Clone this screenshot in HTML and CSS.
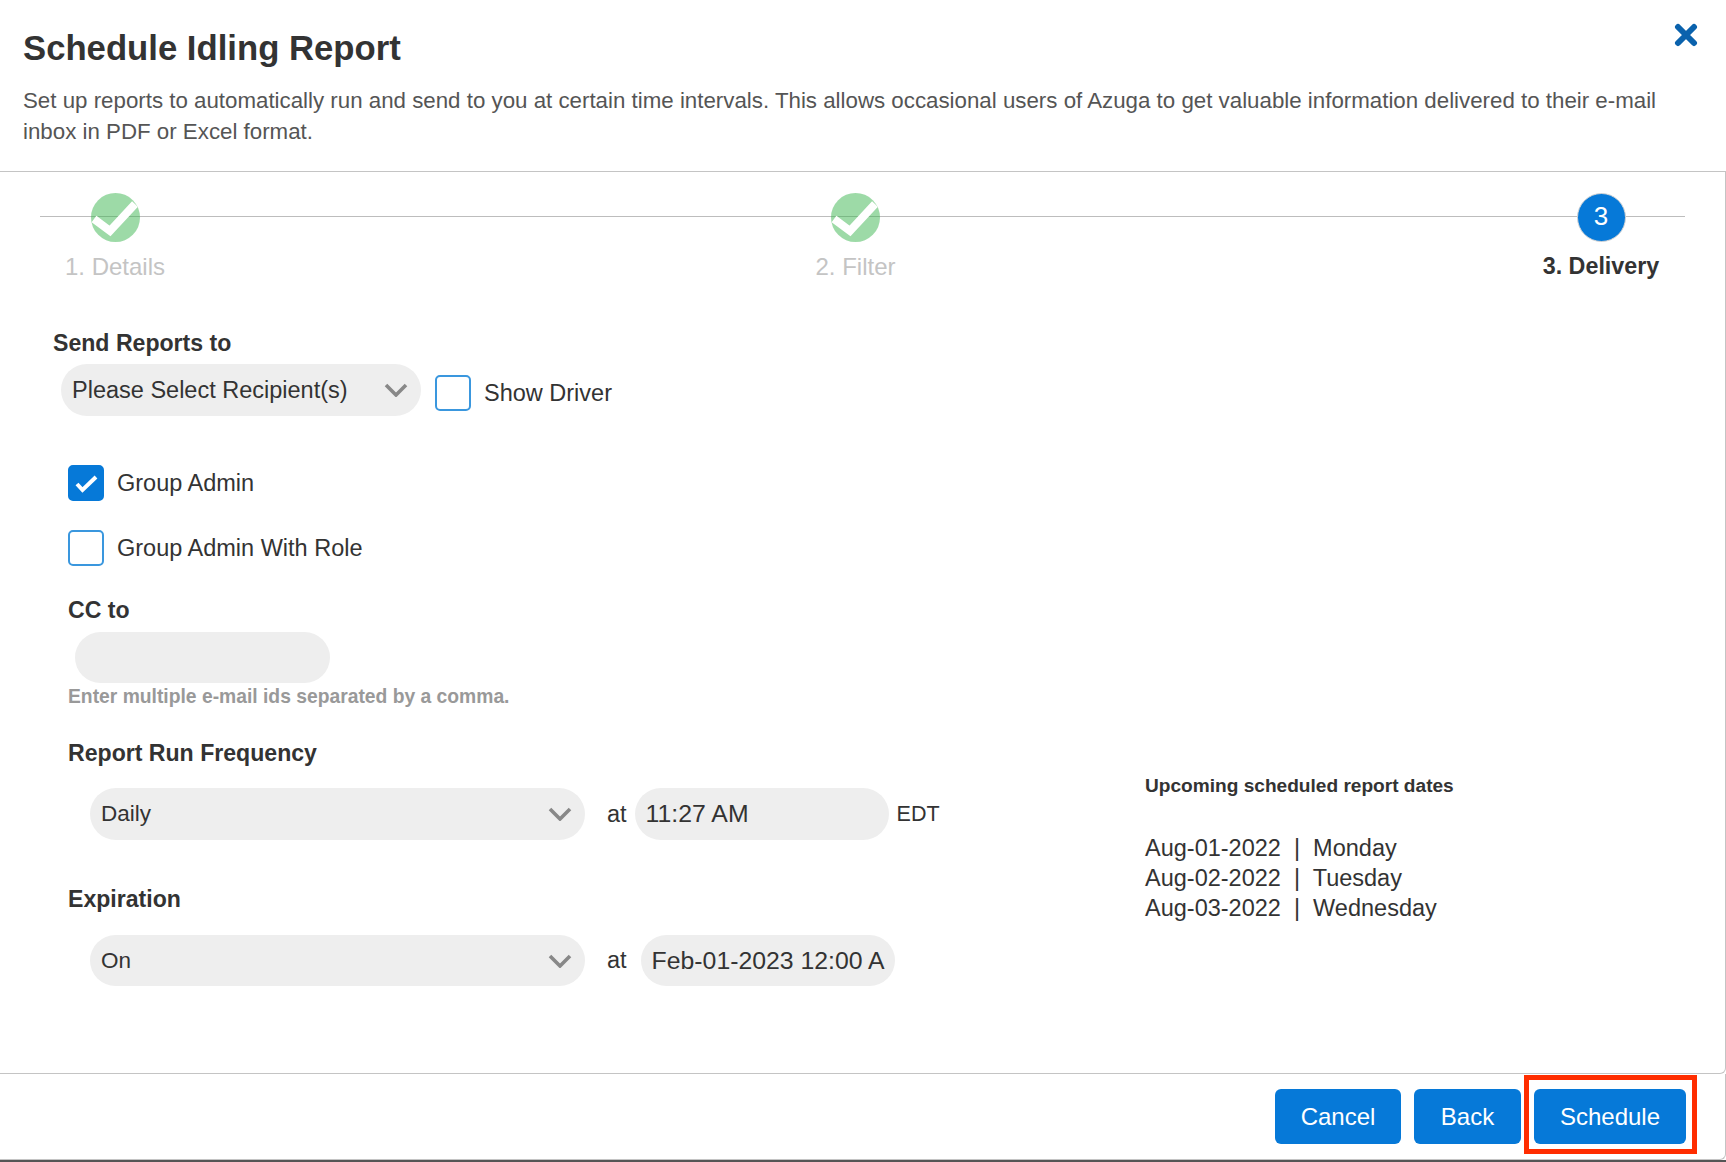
FILE: index.html
```html
<!DOCTYPE html>
<html lang="en">
<head>
<meta charset="utf-8">
<title>Schedule Idling Report</title>
<link rel="stylesheet" href="styles.css">
</head>
<body>
<div class="modal">
  <header class="head">
    <h1 class="title">Schedule Idling Report</h1>
    <p class="desc">Set up reports to automatically run and send to you at certain time intervals. This allows occasional users of Azuga to get valuable information delivered to their e-mail inbox in PDF or Excel format.</p>
    <svg class="close" viewBox="0 0 24 24" aria-label="Close"><path d="M4 4 L20 20 M20 4 L4 20"/></svg>
  </header>
  <main class="content">
    <div class="stepper">
      <div class="step done">
        <span class="circle"><svg viewBox="0 0 49 49"><path d="M3 26 L19 38 L44 11"/></svg></span>
        <span class="step-label">1. Details</span>
      </div>
      <div class="step done mid">
        <span class="circle"><svg viewBox="0 0 49 49"><path d="M3 26 L19 38 L44 11"/></svg></span>
        <span class="step-label">2. Filter</span>
      </div>
      <div class="step active">
        <span class="circle">3</span>
        <span class="step-label">3. Delivery</span>
      </div>
    </div>

    <section class="send">
      <div class="label">Send Reports to</div>
      <div class="send-row">
        <div class="select recipients">Please Select Recipient(s)<svg class="chev" viewBox="0 0 24 14"><path d="M2 2 L12 12 L22 2"/></svg></div>
        <span class="check"></span>
        <span class="check-text">Show Driver</span>
      </div>
    </section>

    <div class="split">
      <div class="left">
        <div class="check-row first">
          <span class="check on"><svg viewBox="0 0 32 32"><path d="M7 17 L12.5 23 L26 10"/></svg></span>
          <span class="check-text">Group Admin</span>
        </div>
        <div class="check-row">
          <span class="check"></span>
          <span class="check-text">Group Admin With Role</span>
        </div>
        <div class="label cc">CC to</div>
        <div class="input cc-input"></div>
        <div class="hint">Enter multiple e-mail ids separated by a comma.</div>

        <div class="label freq">Report Run Frequency</div>
        <div class="field-row">
          <div class="select wide">Daily<svg class="chev" viewBox="0 0 24 14"><path d="M2 2 L12 12 L22 2"/></svg></div>
          <span class="at">at</span>
          <div class="input time">11:27 AM</div>
          <span class="tz">EDT</span>
        </div>

        <div class="label exp">Expiration</div>
        <div class="field-row exp-row">
          <div class="select wide short">On<svg class="chev" viewBox="0 0 24 14"><path d="M2 2 L12 12 L22 2"/></svg></div>
          <span class="at">at</span>
          <div class="input date short">Feb-01-2023 12:00 A</div>
        </div>
      </div>
      <aside class="upcoming">
        <div class="up-title">Upcoming scheduled report dates</div>
        <div class="up-dates">
          <div>Aug-01-2022 &nbsp;|&nbsp; Monday</div>
          <div>Aug-02-2022 &nbsp;|&nbsp; Tuesday</div>
          <div>Aug-03-2022 &nbsp;|&nbsp; Wednesday</div>
        </div>
      </aside>
    </div>
  </main>
  <footer class="foot">
    <button class="btn cancel">Cancel</button>
    <button class="btn back">Back</button>
    <button class="btn schedule">Schedule</button>
    <span class="highlight"></span>
  </footer>
</div>
</body>
</html>
```

FILE: styles.css
```css
* { box-sizing: border-box; }
html, body { margin: 0; padding: 0; background: #fff; }
body {
  width: 1726px;
  height: 1162px;
  overflow: hidden;
  font-family: "Liberation Sans", Arial, sans-serif;
  color: #333;
}
.modal {
  height: 1162px;
  display: flex;
  flex-direction: column;
  border-bottom: 2px solid #555;
}
.head {
  position: relative;
  height: 171px;
  flex: none;
  padding: 28px 40px 0 23px;
}
.title {
  margin: 0;
  font-size: 34.7px;
  line-height: 40px;
  font-weight: 700;
  color: #333;
}
.desc {
  margin: 17px 0 0;
  font-size: 22.3px;
  line-height: 31px;
  color: #555;
}
.close {
  position: absolute;
  left: 1674px;
  top: 23px;
  width: 24px;
  height: 24px;
  fill: none;
  stroke: #0a62ad;
  stroke-width: 6;
  stroke-linecap: round;
}
.content {
  height: 903px;
  flex: none;
  border-top: 1px solid #c4c4c4;
  border-right: 1px solid #c4c4c4;
  border-bottom: 1px solid #c4c4c4;
  border-bottom-right-radius: 6px;
  padding: 21px 0 0;
}
.stepper {
  position: relative;
  margin: 0 69px 0 60px;
  display: flex;
  justify-content: space-between;
}
.stepper::before {
  content: "";
  position: absolute;
  left: -20px;
  right: -29px;
  top: 23px;
  height: 1px;
  background: #bdbdbd;
}
.step {
  position: relative;
  width: 110px;
  display: flex;
  flex-direction: column;
  align-items: center;
}
.step.mid { margin-right: 5px; }
.circle {
  width: 49px;
  height: 49px;
  border-radius: 50%;
  display: flex;
  align-items: center;
  justify-content: center;
  overflow: hidden;
}
.done .circle { background: rgba(60, 181, 80, .5); }
.circle svg {
  width: 49px;
  height: 49px;
  fill: none;
  stroke: #fff;
  stroke-width: 8;
}
.active .circle {
  background: #0679d8;
  color: #fff;
  font-size: 26px;
  border: 1px solid #d5d5d5;
  padding-bottom: 3px;
}
.step-label {
  margin-top: 11px;
  font-size: 24px;
  line-height: 27px;
  white-space: nowrap;
  color: #c4c4c4;
}
.active .step-label { color: #333; font-weight: 700; font-size: 23.3px; }
.send { padding: 49px 0 0 53px; }
.label {
  font-size: 23.1px;
  line-height: 28px;
  font-weight: 700;
  color: #333;
}
.send-row {
  margin: 7px 0 0 8px;
  display: flex;
  align-items: center;
}
.select, .input {
  background: #eee;
  font-size: 23.5px;
  color: #333;
  display: flex;
  align-items: center;
  border-radius: 26px;
  padding-left: 11px;
  position: relative;
}
.select { height: 52px; }
.recipients { width: 360px; }
.wide { width: 495px; font-size: 22.5px; }
.chev {
  position: absolute;
  right: 13px;
  top: 19px;
  width: 24px;
  height: 14px;
  fill: none;
  stroke: #888;
  stroke-width: 3.6;
}
.check {
  flex: none;
  width: 36px;
  height: 36px;
  border: 2px solid #3a97de;
  border-radius: 5px;
  background: #fff;
  display: block;
}
.send-row .check { margin: 6px 0 0 14px; }
.check-text { font-size: 23.5px; line-height: 28px; margin-left: 13px; color: #333; }
.send-row .check-text { margin-top: 6px; }
.check.on { background: #0679d8; border-color: #0679d8; }
.check.on svg {
  display: block;
  width: 100%;
  height: 100%;
  fill: none;
  stroke: #fff;
  stroke-width: 4;
}
.split { display: flex; }
.left { width: 1145px; padding-left: 68px; flex: none; }
.check-row { display: flex; align-items: center; height: 36px; margin-top: 29px; }
.check-row.first { margin-top: 49px; }
.cc { margin-top: 30px; }
.cc-input { width: 255px; height: 51px; margin: 8px 0 0 7px; }
.hint {
  margin-top: 2px;
  font-size: 19.3px;
  line-height: 24px;
  font-weight: 700;
  color: #999;
}
.freq { margin-top: 30px; }
.field-row { display: flex; align-items: center; margin: 21px 0 0 22px; }
.exp-row { margin-top: 22px; }
.at { font-size: 23.5px; margin-left: 22px; color: #333; }
.time { width: 254px; height: 52px; margin-left: 8px; font-size: 24.8px; }
.tz { font-size: 21.5px; margin-left: 8px; color: #333; }
.exp { margin-top: 45px; }
.short { height: 51px; }
.date { width: 254px; margin-left: 14px; white-space: nowrap; overflow: hidden; font-size: 24.8px; }
.upcoming { margin-top: 358px; }
.up-title {
  font-size: 19.1px;
  line-height: 24px;
  font-weight: 700;
  color: #333;
}
.up-dates {
  margin-top: 35px;
  font-size: 23.5px;
  line-height: 30px;
  color: #333;
}
.foot {
  position: relative;
  flex: 1;
  display: flex;
  justify-content: flex-end;
  align-items: flex-start;
  gap: 13px;
  padding: 15px 39px 0 0;
  border-right: 1px solid #c4c4c4;
  border-bottom: 1px solid #c4c4c4;
  border-bottom-right-radius: 6px;
}
.btn {
  height: 55px;
  border: 0;
  border-radius: 6px;
  background: #0679d8;
  color: #fff;
  font-family: "Liberation Sans", Arial, sans-serif;
  font-size: 24px;
  padding: 0;
}
.cancel { width: 126px; }
.back { width: 107px; }
.schedule { width: 152px; }
.highlight {
  position: absolute;
  left: 1524px;
  top: 1px;
  width: 173px;
  height: 79px;
  border: 5px solid #ff2d00;
}
```
